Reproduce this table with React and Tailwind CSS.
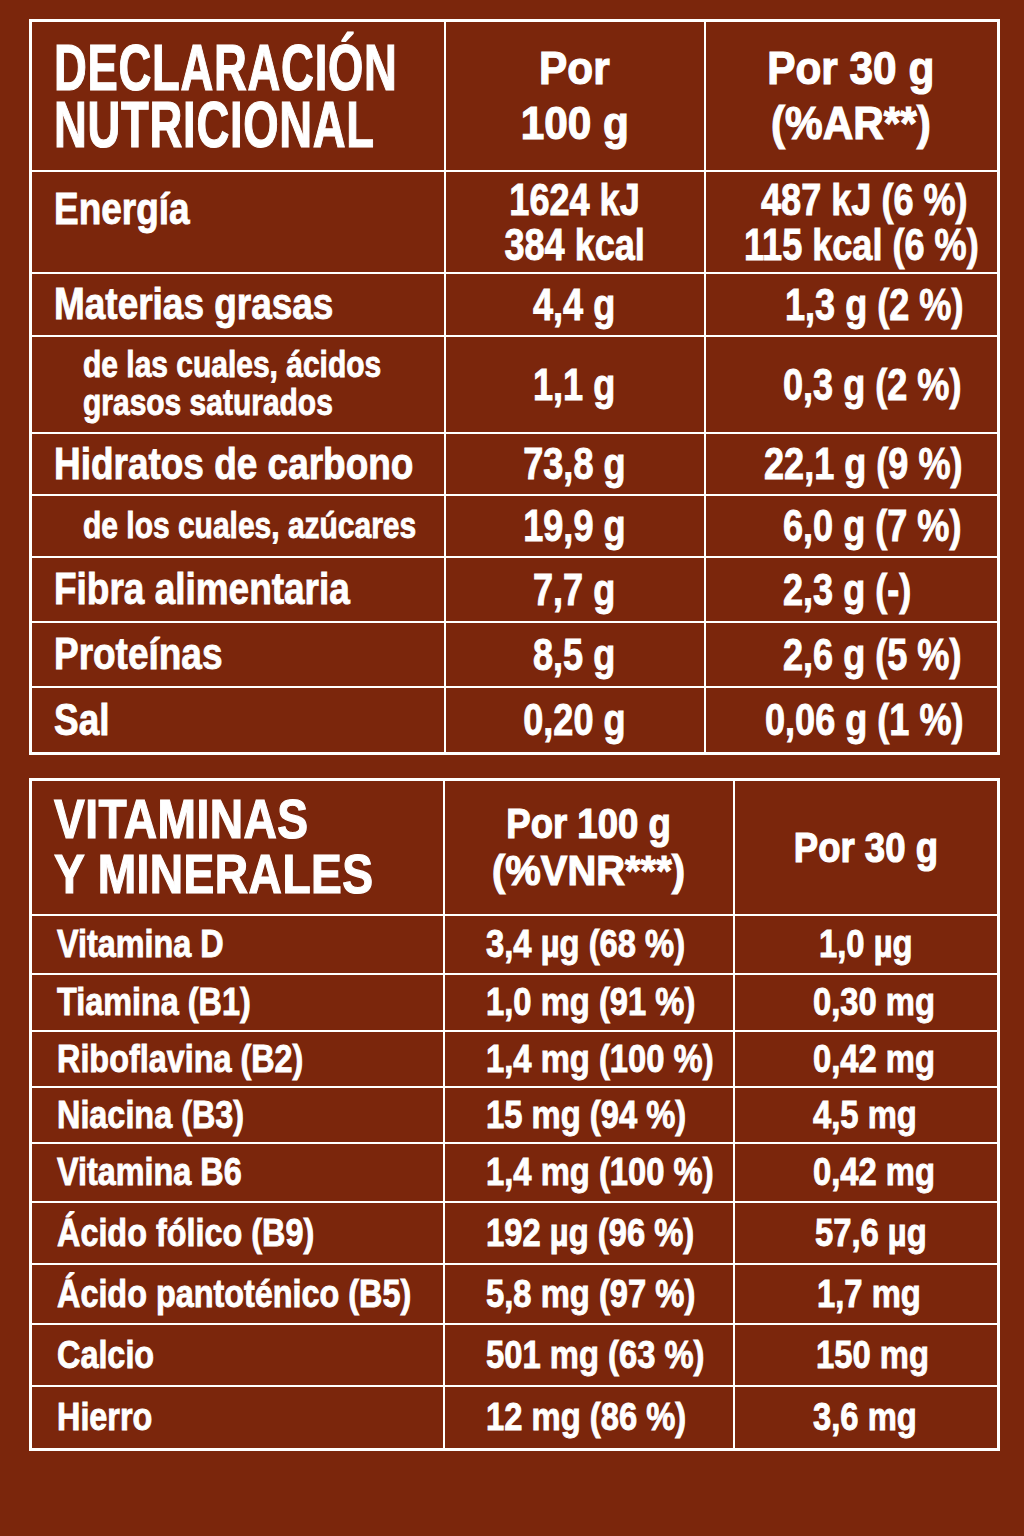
import React from "react";

const F = "font-['Liberation_Sans','Arial',sans-serif] font-bold";
const SH = "[-webkit-text-stroke:1.2px_white]";
const SB = "[-webkit-text-stroke:0.9px_white]";

const rows1 = [
  { h: "h-[102px]", label: ["Energía"], sub: false, top: true, v1: ["1624 kJ", "384 kcal"], v2: ["487 kJ (6 %)", "115 kcal (6 %)"], v2lines: ["pl-[55px]", "pl-[38px]"] },
  { h: "h-[63px]", label: ["Materias grasas"], v1: ["4,4 g"], v2: ["1,3 g (2 %)"], v2cls: "pl-[79px]" },
  { h: "h-[97px]", label: ["de las cuales, ácidos", "grasos saturados"], sub: true, v1: ["1,1 g"], v2: ["0,3 g (2 %)"], v2cls: "pl-[77px]" },
  { h: "h-[62px]", label: ["Hidratos de carbono"], v1: ["73,8 g"], v2: ["22,1 g (9 %)"], v2cls: "pl-[58px]" },
  { h: "h-[62px]", label: ["de los cuales, azúcares"], sub: true, v1: ["19,9 g"], v2: ["6,0 g (7 %)"], v2cls: "pl-[77px]" },
  { h: "h-[65px]", label: ["Fibra alimentaria"], v1: ["7,7 g"], v2: ["2,3 g (-)"], v2cls: "pl-[77px]" },
  { h: "h-[65px]", label: ["Proteínas"], v1: ["8,5 g"], v2: ["2,6 g (5 %)"], v2cls: "pl-[77px]" },
  { h: "h-[67px]", label: ["Sal"], v1: ["0,20 g"], v2: ["0,06 g (1 %)"], v2cls: "pl-[59px]" },
];

const rows2 = [
  { h: "h-[59px]", label: "Vitamina D", a: "3,4 µg (68 %)", b: "1,0 µg", bcls: "pl-[84px]" },
  { h: "h-[57px]", label: "Tiamina (B1)", a: "1,0 mg (91 %)", b: "0,30 mg", bcls: "pl-[78px]" },
  { h: "h-[56px]", label: "Riboflavina (B2)", a: "1,4 mg (100 %)", b: "0,42 mg", bcls: "pl-[78px]" },
  { h: "h-[56px]", label: "Niacina (B3)", a: "15 mg (94 %)", b: "4,5 mg", bcls: "pl-[78px]" },
  { h: "h-[59px]", label: "Vitamina B6", a: "1,4 mg (100 %)", b: "0,42 mg", bcls: "pl-[78px]" },
  { h: "h-[62px]", label: "Ácido fólico (B9)", a: "192 µg (96 %)", b: "57,6 µg", bcls: "pl-[80px]" },
  { h: "h-[60px]", label: "Ácido pantoténico (B5)", a: "5,8 mg (97 %)", b: "1,7 mg", bcls: "pl-[82px]" },
  { h: "h-[62px]", label: "Calcio", a: "501 mg (63 %)", b: "150 mg", bcls: "pl-[81px]" },
  { h: "h-[64px]", label: "Hierro", a: "12 mg (86 %)", b: "3,6 mg", bcls: "pl-[78px]" },
];

const cell = "border-2 border-white whitespace-nowrap overflow-visible";

export default function App() {
  return (
    <div className={`min-h-[1536px] w-[1024px] bg-[#7b260c] pl-[29px] pt-[19px] text-white ${F}`}>
      <table className="w-[968px] table-fixed border-collapse border-[3px] border-white">
        <colgroup>
          <col className="w-[414px]" />
          <col className="w-[260px]" />
          <col className="w-[294px]" />
        </colgroup>
        <tbody>
          <tr className="h-[150px]">
            <td className={`${cell} ${SH} pl-[22px] pt-[2px] align-middle text-[64px] leading-[57px] tracking-[1px]`}>
              <div><span className="inline-block origin-left scale-x-[0.71]">DECLARACIÓN</span></div>
              <div><span className="inline-block origin-left scale-x-[0.71]">NUTRICIONAL</span></div>
            </td>
            <td className={`${cell} ${SH} text-center align-middle text-[46px] leading-[55px]`}>
              <div><span className="inline-block origin-center scale-x-[0.92]">Por</span></div>
              <div><span className="inline-block origin-center scale-x-[0.92]">100 g</span></div>
            </td>
            <td className={`${cell} ${SH} text-center align-middle text-[46px] leading-[55px]`}>
              <div><span className="inline-block origin-center scale-x-[0.92]">Por 30 g</span></div>
              <div><span className="inline-block origin-center scale-x-[0.92]">(%AR**)</span></div>
            </td>
          </tr>
          {rows1.map((r, i) => (
            <tr key={i} className={r.h}>
              <td
                className={`${cell} ${SB} ${r.sub ? "pl-[51px] text-[37px] leading-[38px]" : "pl-[22px] text-[44px] leading-[46px]"} ${r.top ? "align-top pt-[14px]" : "align-middle"}`}
              >
                {r.label.map((l, j) => (
                  <div key={j}>
                    <span className={`inline-block origin-left ${r.sub ? "scale-x-[0.81]" : "scale-x-[0.84]"}`}>{l}</span>
                  </div>
                ))}
              </td>
              <td className={`${cell} ${SB} text-center align-middle text-[44px] leading-[45px]`}>
                {r.v1.map((v, j) => (
                  <div key={j}>
                    <span className="inline-block origin-center scale-x-[0.82]">{v}</span>
                  </div>
                ))}
              </td>
              <td className={`${cell} ${SB} align-middle text-[44px] leading-[45px] ${r.v2cls || ""}`}>
                {r.v2.map((v, j) => (
                  <div key={j} className={r.v2lines ? r.v2lines[j] : ""}>
                    <span className="inline-block origin-left scale-x-[0.82]">{v}</span>
                  </div>
                ))}
              </td>
            </tr>
          ))}
        </tbody>
      </table>

      <table className="mt-[23px] w-[968px] table-fixed border-collapse border-[3px] border-white">
        <colgroup>
          <col className="w-[413px]" />
          <col className="w-[290px]" />
          <col className="w-[265px]" />
        </colgroup>
        <tbody>
          <tr className="h-[135px]">
            <td className={`${cell} ${SH} pl-[22px] align-middle text-[55px] leading-[55px] tracking-[0.5px]`}>
              <div><span className="inline-block origin-left scale-x-[0.84]">VITAMINAS</span></div>
              <div><span className="inline-block origin-left scale-x-[0.84]">Y MINERALES</span></div>
            </td>
            <td className={`${cell} ${SH} text-center align-middle text-[42px] leading-[47px]`}>
              <div><span className="inline-block origin-center scale-x-[0.87]">Por 100 g</span></div>
              <div><span className="inline-block origin-center scale-x-[0.95]">(%VNR***)</span></div>
            </td>
            <td className={`${cell} ${SH} text-center align-middle text-[42px] leading-[47px]`}>
              <span className="inline-block origin-center scale-x-[0.87]">Por 30 g</span>
            </td>
          </tr>
          {rows2.map((r, i) => (
            <tr key={i} className={r.h}>
              <td className={`${cell} ${SB} pl-[25px] align-middle text-[39px] leading-[42px]`}>
                <span className="inline-block origin-left scale-x-[0.83]">{r.label}</span>
              </td>
              <td className={`${cell} ${SB} pl-[41px] align-middle text-[39px] leading-[42px]`}>
                <span className="inline-block origin-left scale-x-[0.84]">{r.a}</span>
              </td>
              <td className={`${cell} ${SB} align-middle text-[39px] leading-[42px] ${r.bcls}`}>
                <span className="inline-block origin-left scale-x-[0.84]">{r.b}</span>
              </td>
            </tr>
          ))}
        </tbody>
      </table>
    </div>
  );
}
